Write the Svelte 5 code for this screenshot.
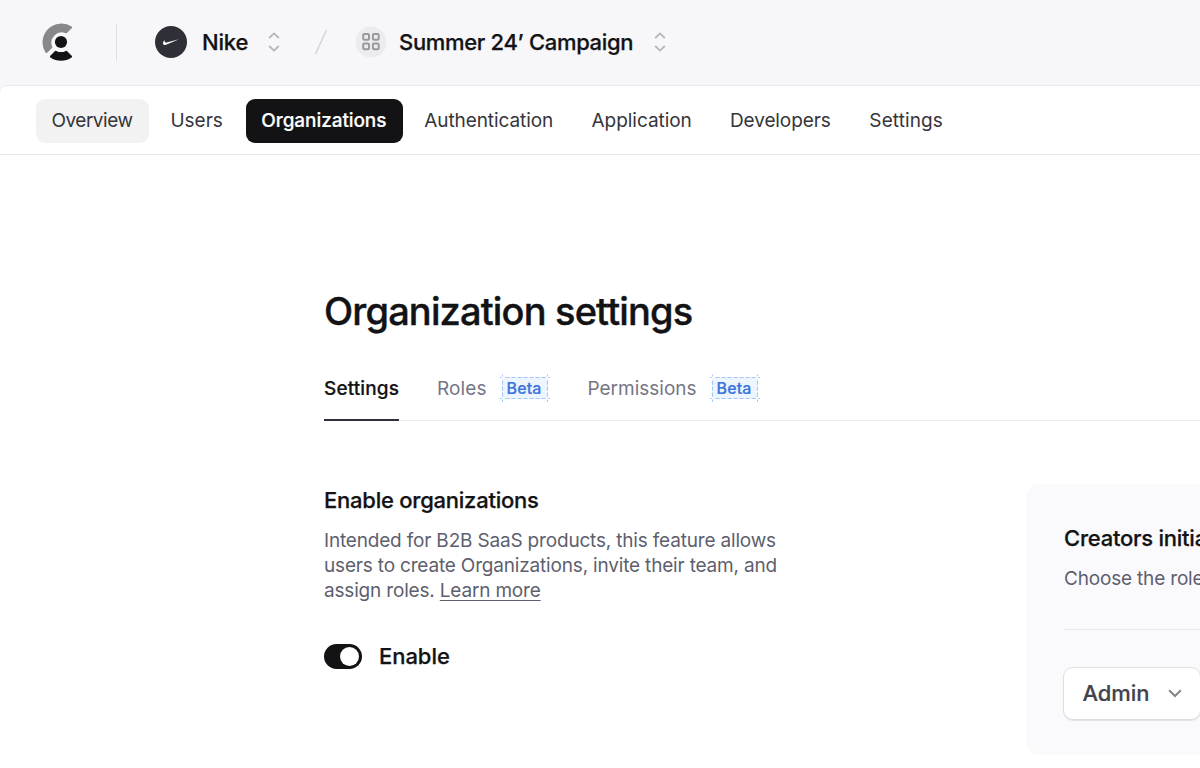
<script>
  const nav = [
    { label: 'Overview', w: 113, state: 'hover', ls: -0.5, dx: -0.5 },
    { label: 'Users', w: 84, ls: 0, dx: -1 },
    { label: 'Organizations', w: 157, state: 'active', ls: -0.08, dx: -0.5 },
    { label: 'Authentication', w: 161, ls: -0.07, dx: -1 },
    { label: 'Application', w: 132, ls: -0.05, dx: -1 },
    { label: 'Developers', w: 133, ls: -0.1, dx: -1 },
    { label: 'Settings', w: 106, ls: 0.1, dx: -1 }
  ];
</script>

{#snippet updown()}
  <svg class="updown" width="12" height="20" viewBox="0 0 12 20" fill="none" stroke="#b7b7bb" stroke-width="1.8">
    <path d="M1.2 6 6 1.4 10.8 6M1.2 14 6 18.6 10.8 14" />
  </svg>
{/snippet}

{#snippet beta()}
  <span class="beta">
    <svg width="50" height="28" viewBox="0 0 50 28" fill="none" stroke="#a5c8fa" stroke-width="1.1">
      <rect x="2.5" y="3.5" width="45" height="21" fill="#edf6fe" stroke="none" />
      <path stroke-dasharray="4.2 1.8" d="M5.5 3.5H46M5.5 24.5H46M2.5 6.5V23M47.5 6.5V23" />
      <path d="M0 3.5H1.8M2.5 .5V2.6M48.2 3.5H50M47.5 .5V2.6M0 24.5H1.8M2.5 25.4V28M48.2 24.5H50M47.5 25.4V28" />
    </svg>
    <b>Beta</b>
  </span>
{/snippet}

<div class="page">
  <header>
    <svg class="logo" width="32" height="38" viewBox="0 0 32 38">
      <path fill="#88888a" d="M29.6 3.5A18.9 18.9 0 0 0 3.5 29.6Q4.3 30.5 5.2 29.7L10 24.9A1 1 0 0 0 10.2 23.7A10.3 10.3 0 0 1 23.7 10.2A1 1 0 0 0 24.9 10L29.7 5.2Q30.5 4.3 29.6 3.5Z" />
      <circle cx="19" cy="19" r="6.1" fill="#131316" />
      <path fill="#131316" d="M29.6 34.5Q30.5 33.7 29.7 32.8L24.9 28A1 1 0 0 0 23.7 27.9A10.3 10.3 0 0 1 14.3 27.9A1 1 0 0 0 13.1 28L8.3 32.8Q7.5 33.7 8.4 34.5A18.9 18.9 0 0 0 29.6 34.5Z" />
    </svg>
    <i class="vr"></i>
    <svg class="avatar" width="32" height="32" viewBox="0 0 32 32">
      <circle cx="16" cy="16" r="16" fill="#2f3037" />
      <path fill="#fff" d="M24 13.3 12.3 18.3C10 19.4 8.1 19.3 8 17.2 8 16 8.7 14.9 9.6 13.9 9.3 16 10.2 16.9 12.5 16.3Z" />
    </svg>
    <span class="crumb nike">Nike</span>
    {@render updown()}
    <svg class="slash" width="14" height="26" viewBox="0 0 14 26" stroke="#d6d6da" stroke-width="1.6"><path d="M12.5 1 1.5 25" /></svg>
    <svg class="app" width="32" height="32" viewBox="0 0 32 32" fill="none" stroke="#98989d" stroke-width="2">
      <circle cx="16" cy="16" r="15.5" fill="#ececef" stroke="none" />
      <rect x="8.2" y="8" width="5.8" height="5.8" rx="1.3" /><rect x="17.9" y="8" width="5.8" height="5.8" rx="1.3" />
      <rect x="8.2" y="17.5" width="5.8" height="5.8" rx="1.3" /><rect x="17.9" y="17.5" width="5.8" height="5.8" rx="1.3" />
    </svg>
    <span class="crumb campaign">Summer 24’ Campaign</span>
    {@render updown()}
  </header>

  <nav>
    {#each nav as n}
      <a class={n.state} style="width:{n.w}px;letter-spacing:{n.ls}px;text-indent:{n.dx}px">{n.label}</a>
    {/each}
  </nav>

  <main>
    <h1>Organization settings</h1>
    <div class="tabs">
      <span class="tab on">Settings</span>
      <span class="tab roles">Roles</span>{@render beta()}
      <span class="tab perms">Permissions</span>{@render beta()}
    </div>
    <div class="cols">
      <section>
        <h2>Enable organizations</h2>
        <p>
          Intended for B2B SaaS products, this feature allows<br />
          users to create Organizations, invite their team, and<br />
          assign roles. <u>Learn more</u>
        </p>
        <div class="toggle"><i></i><span>Enable</span></div>
      </section>
      <aside>
        <h2>Creators initial role</h2>
        <p>Choose the role that</p>
        <hr />
        <div class="select">
          <span>Admin</span>
          <svg width="14" height="9" viewBox="0 0 14 9" fill="none" stroke="#85858b" stroke-width="2"><path d="M1.2 1.2 7 7 12.8 1.2" /></svg>
        </div>
      </aside>
    </div>
  </main>
</div>

<style>
  :global(body) { margin: 0; overflow: hidden; }
  .page {
    width: 1200px; height: 768px; overflow: hidden; box-sizing: border-box;
    background: #f7f7f9; color: #131316;
    font-family: Inter, "Liberation Sans", sans-serif;
    white-space: nowrap;
    display: flex; flex-direction: column;
  }
  svg { flex: none; display: block; }
  header { height: 85px; flex: none; display: flex; align-items: center; padding: 0 0 1px 42px; box-sizing: border-box; }
  .vr { width: 1px; height: 37px; background: #e0e0e4; margin: 0 38px 0 42px; }
  .crumb, h2, .toggle { font-weight: 500; -webkit-text-stroke: 0.25px currentColor; }
  .crumb { font-size: 22px; line-height: 28px; flex: none; }
  .nike { margin-left: 15px; width: 66px; letter-spacing: -0.2px; }
  .slash { margin: 0 27px 0 34px; }
  .campaign { margin-left: 12px; width: 254.5px; letter-spacing: -0.32px; }
  nav {
    height: 70px; flex: none; box-sizing: border-box; background: #fff;
    border-top: 1px solid #e9e9ec; border-bottom: 1px solid #e7e7ea;
    border-top-left-radius: 8px; display: flex; gap: 6.4px; padding: 13px 0 0 36px;
  }
  nav a {
    height: 44px; line-height: 43px; box-sizing: border-box; padding-left: 16px; border-radius: 9px;
    font-size: 19px; color: #35353b; flex: none;
  }
  nav .hover { background: #f2f2f2; }
  nav .active { background: #131316; color: #fff; font-weight: 500; -webkit-text-stroke: 0.2px #fff; }
  main { flex: 1; background: #fff; padding: 132px 0 0 324px; }
  h1 { margin: 0; font-size: 38px; line-height: 48px; font-weight: 500; letter-spacing: -0.84px; -webkit-text-stroke: 0.4px currentColor; }
  .tabs {
    height: 56px; margin-top: 30px; display: flex; align-items: flex-start;
    border-bottom: 1px solid #ececee; box-sizing: border-box;
  }
  .tab { font-size: 19px; line-height: 47px; height: 56px; box-sizing: border-box; color: #747686; flex: none; }
  .on { width: 75px; color: #131316; font-weight: 500; border-bottom: 2px solid #2f3037; letter-spacing: 0.12px; -webkit-text-stroke: 0.2px currentColor; }
  .roles { margin-left: 38px; width: 63px; letter-spacing: 0.1px; }
  .perms { margin-left: 37.5px; width: 122.5px; }
  .beta { width: 50px; height: 28px; margin-top: 9px; display: grid; flex: none; }
  .beta > * { grid-area: 1 / 1; }
  .beta b { font-weight: 500; font-size: 16px; line-height: 29px; color: #3b74dc; text-align: center; margin-left: -2px; letter-spacing: 0.1px; -webkit-text-stroke: 0.2px currentColor; }
  .cols { display: flex; padding-top: 63px; }
  section { width: 702px; flex: none; }
  h2 { margin: 0; font-size: 22px; line-height: 32px; letter-spacing: -0.24px; }
  p { margin: 12px 0 0; font-size: 19px; line-height: 25px; color: #5e5f6e; letter-spacing: -0.18px; }
  u { text-decoration-thickness: 1px; text-underline-offset: 3px; }
  .toggle { display: flex; align-items: center; margin-top: 39px; font-size: 22px; line-height: 28px; gap: 17px; letter-spacing: -0.05px; }
  .toggle i { width: 38px; height: 25px; border-radius: 13px; background: #131316; display: flex; align-items: center; justify-content: flex-end; padding-right: 3px; box-sizing: border-box; }
  .toggle i::after { content: ""; width: 19px; height: 19px; border-radius: 50%; background: #fff; }
  aside { flex: none; width: 400px; height: 271px; box-sizing: border-box; background: #fafafc; border-radius: 14px; padding: 38px 0 0 38px; }
  hr { border: 0; height: 1px; background: #e9e9ec; margin: 38px 0 0; }
  aside .select {
    width: 138.5px; height: 53px; margin: 36.5px 0 0 -1.5px; box-sizing: border-box; border: 1px solid #dfdfe2;
    border-radius: 10px; background: #fff; box-shadow: 0 1px 1px rgba(0,0,0,.1);
    display: flex; align-items: center; padding-left: 19px;
    font-size: 22px; font-weight: 500; color: #42434d; letter-spacing: -0.1px;
    -webkit-text-stroke: 0.2px currentColor;
  }
  .select span { width: 85px; }
</style>
